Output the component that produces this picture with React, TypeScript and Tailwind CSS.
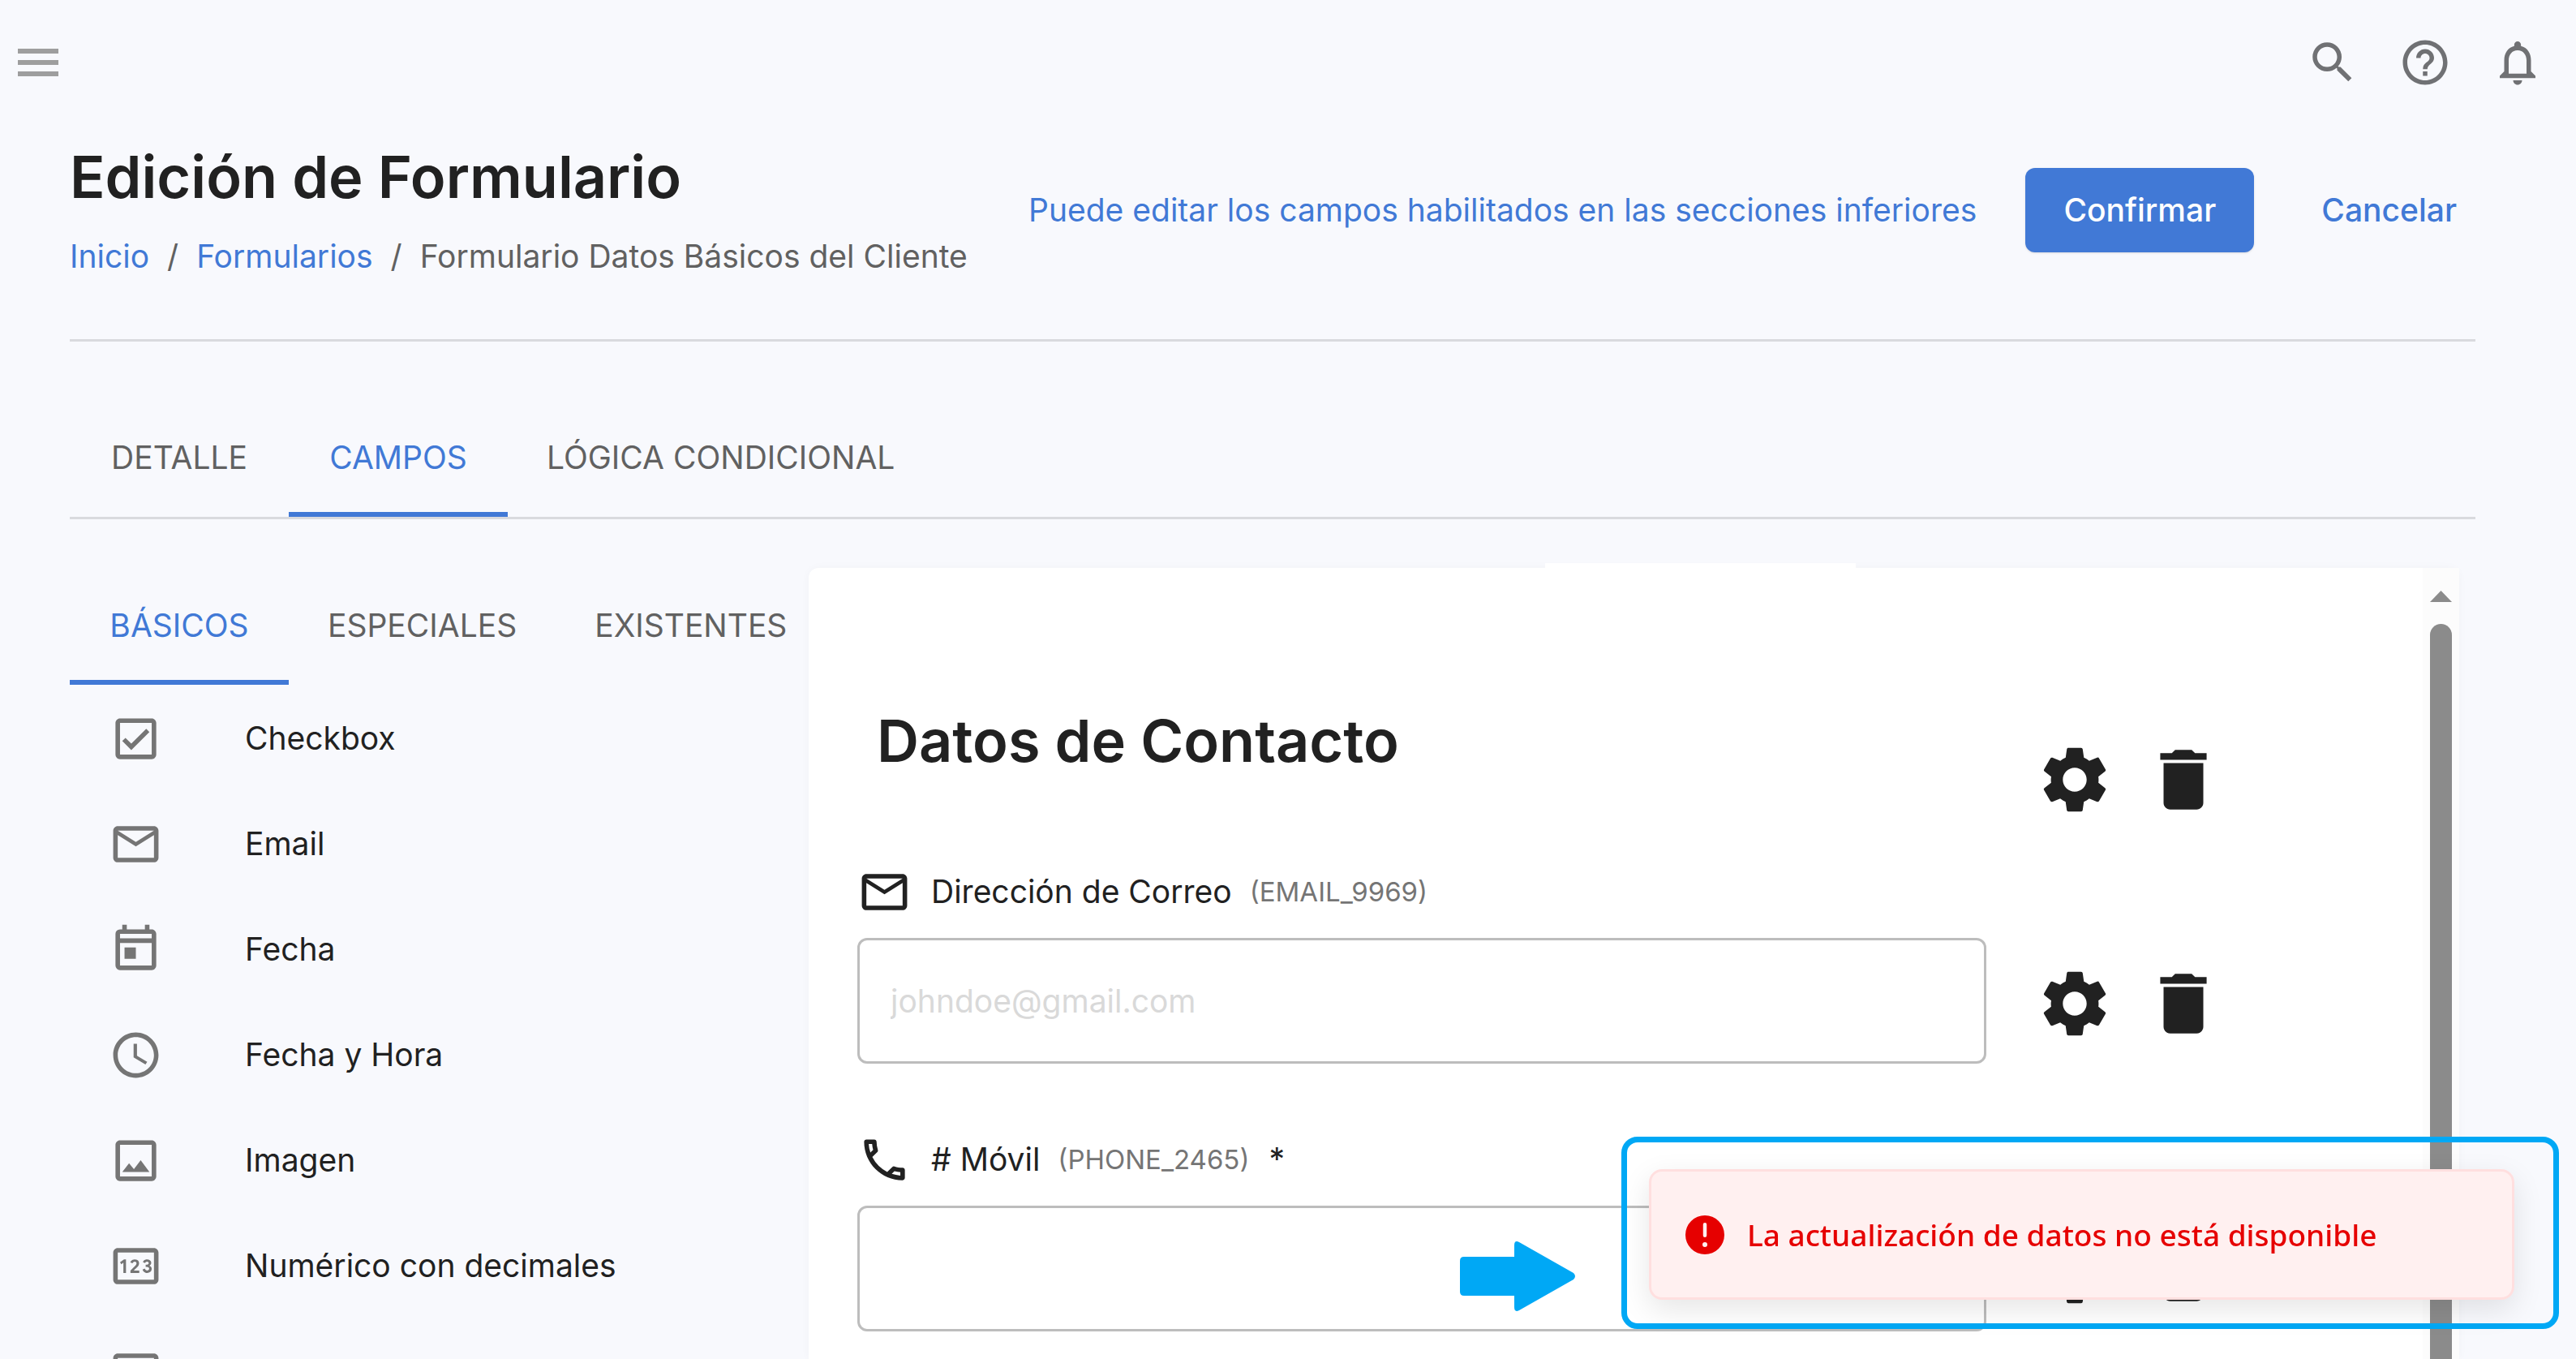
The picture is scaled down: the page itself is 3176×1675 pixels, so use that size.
import clsx from "clsx";
import type { IconType } from "react-icons";
import {
  MdDelete,
  MdHelpOutline,
  MdNotificationsNone,
  MdOutlineCheckBox,
  MdOutlineEmail,
  MdOutlineImage,
  MdOutlinePhone,
  MdOutlinePin,
  MdOutlineSchedule,
  MdOutlineToday,
  MdSearch,
  MdSettings,
} from "react-icons/md";

const tabs = ["DETALLE", "CAMPOS", "LÓGICA CONDICIONAL"];
const fieldTabs = ["BÁSICOS", "ESPECIALES", "EXISTENTES"];

const fieldTypes: { id: string; label?: string; icon: IconType }[] = [
  { id: "checkbox", label: "Checkbox", icon: MdOutlineCheckBox },
  { id: "email", label: "Email", icon: MdOutlineEmail },
  { id: "date", label: "Fecha", icon: MdOutlineToday },
  { id: "datetime", label: "Fecha y Hora", icon: MdOutlineSchedule },
  { id: "image", label: "Imagen", icon: MdOutlineImage },
  { id: "decimal", label: "Numérico con decimales", icon: MdOutlinePin },
  { id: "integer", icon: MdOutlinePin },
];

function Tab({ label, active }: { label: string; active: boolean }) {
  return (
    <button
      type="button"
      role="tab"
      aria-selected={active}
      className={clsx(
        "h-[147px] min-w-[270px] shrink-0 border-y-6 border-t-transparent px-12 pt-px text-[39px] whitespace-nowrap",
        active
          ? "border-b-[#4179d6] text-[#4179d6]"
          : "border-b-transparent text-[#616161]",
      )}
    >
      {label}
    </button>
  );
}

function RowActions() {
  return (
    <div className="flex shrink-0 gap-9 text-[#212121]">
      <button type="button" aria-label="Configurar">
        <MdSettings size={98} />
      </button>
      <button type="button" aria-label="Eliminar">
        <MdDelete size={98} />
      </button>
    </div>
  );
}

interface FieldProps {
  id: string;
  label: string;
  code: string;
  icon: IconType;
  type: string;
  placeholder?: string;
  required?: boolean;
}

function Field({ id, label, code, icon: Icon, type, placeholder, required }: FieldProps) {
  return (
    <div className="flex items-end gap-[60px]">
      <div className="min-w-0 flex-1">
        <label htmlFor={id} className="flex h-[67px] items-center text-[39px] text-[#212121]">
          <Icon size={67} className="mr-6 shrink-0" />
          {label}
          <span className="ml-[22px] text-[33px] text-[#757575]">({code})</span>
          {required && <span className="ml-6">*</span>}
        </label>
        <input
          id={id}
          type={type}
          placeholder={placeholder}
          className="mt-[23px] h-[155px] w-full rounded-xl border-3 border-[#bdbdbd] bg-white px-[38px] text-[39px] placeholder:text-[#d9d9d9]"
        />
      </div>
      <div className="mb-[25px]">
        <RowActions />
      </div>
    </div>
  );
}

function Toast() {
  return (
    <div className="fixed right-[21px] bottom-[37px] w-[1156px] rounded-[20px] border-7 border-[#00a8f5] pt-[33px] pr-12 pb-[29px] pl-[27px]">
      <div
        role="alert"
        className="flex h-[161px] items-center gap-[22px] rounded-2xl border-3 border-[#ffdfdf] bg-[#fff0f0] px-9 text-[#e60000] shadow-[0_12px_36px_rgba(0,0,0,0.1)]"
      >
        <svg viewBox="0 0 20 20" className="size-[60px] shrink-0" fill="currentColor">
          <path
            fillRule="evenodd"
            clipRule="evenodd"
            d="M18 10a8 8 0 1 1-16 0 8 8 0 0 1 16 0Zm-8-5a.75.75 0 0 1 .75.75v4.5a.75.75 0 0 1-1.5 0v-4.5A.75.75 0 0 1 10 5Zm0 10a1 1 0 1 0 0-2 1 1 0 0 0 0 2Z"
          />
        </svg>
        <span className="font-['Noto_Sans',sans-serif] text-[37px] font-medium whitespace-nowrap">
          La actualización de datos no está disponible
        </span>
      </div>
      <svg
        viewBox="0 0 142 86"
        className="absolute top-[122px] right-[1206px] w-[142px] fill-[#00a8f5]"
        aria-hidden="true"
      >
        <path d="M5 19h62V5q0-7 6-4l67 38q4 4 0 8L73 85q-6 3-6-4V67H5q-5 0-5-5V24q0-5 5-5z" />
      </svg>
    </div>
  );
}

export default function App() {
  return (
    <div className="flex h-screen flex-col overflow-hidden bg-[#f8f9fd] font-['Inter',sans-serif]">
      <header className="flex h-[154px] shrink-0 items-center justify-between pr-[39px] pl-[22px] text-[#707174]">
        <button type="button" aria-label="Menú" className="flex flex-col gap-2">
          <span className="h-[6px] w-[50px] bg-[#9e9e9e]" />
          <span className="h-[6px] w-[50px] bg-[#9e9e9e]" />
          <span className="h-[6px] w-[50px] bg-[#9e9e9e]" />
        </button>
        <div className="flex gap-12">
          <button type="button" aria-label="Buscar">
            <MdSearch size={66} />
          </button>
          <button type="button" aria-label="Ayuda">
            <MdHelpOutline size={66} />
          </button>
          <button type="button" aria-label="Notificaciones">
            <MdNotificationsNone size={66} />
          </button>
        </div>
      </header>

      <main className="flex min-h-0 flex-1 flex-col pr-[124px] pl-[86px]">
        {/* Page title and actions */}
        <div className="flex shrink-0 justify-between border-b-3 border-[#d9dade] pt-6 pb-[74px]">
          <div>
            <h1 className="text-[72px] leading-[80px] font-semibold text-[#212121]">
              Edición de Formulario
            </h1>
            <nav className="mt-[30px] flex gap-[22px] text-[39px] leading-[56px] text-[#616161]">
              <a href="#inicio" className="text-[#4179d6]">Inicio</a>
              <span>/</span>
              <a href="#formularios" className="text-[#4179d6]">Formularios</a>
              <span>/</span>
              <span>Formulario Datos Básicos del Cliente</span>
            </nav>
          </div>
          <div className="mt-[29px] flex h-[104px] items-center text-[39px] text-[#4179d6]">
            <p>Puede editar los campos habilitados en las secciones inferiores</p>
            <button
              type="button"
              className="ml-[60px] h-full w-[282px] rounded-xl bg-[#4179d6] font-medium text-white shadow-sm"
            >
              Confirmar
            </button>
            <button type="button" className="ml-[60px] h-full px-[23px] font-medium">
              Cancelar
            </button>
          </div>
        </div>

        <div role="tablist" className="mt-[69px] flex shrink-0 border-b-3 border-[#d9dade]">
          {tabs.map((tab) => (
            <Tab key={tab} label={tab} active={tab === "CAMPOS"} />
          ))}
        </div>

        <div className="flex min-h-0 flex-1">
          {/* Field palette */}
          <aside className="w-[911px] shrink-0 overflow-hidden pt-[57px]">
            <div role="tablist" className="flex">
              {fieldTabs.map((tab) => (
                <Tab key={tab} label={tab} active={tab === "BÁSICOS"} />
              ))}
            </div>
            <ul className="pt-px">
              {fieldTypes.map(({ id, label, icon: Icon }) => (
                <li key={id}>
                  <button
                    type="button"
                    aria-label={label ?? id}
                    className="flex h-[130px] w-full items-center gap-[101px] pl-12 text-[39px] text-[#212121]"
                  >
                    <Icon size={67} color="#757575" />
                    {label}
                  </button>
                </li>
              ))}
            </ul>
          </aside>

          {/* Form preview */}
          <section className="relative mt-[60px] mr-[20px] flex min-w-0 flex-1 rounded-t-xl bg-white shadow-[0_0_12px_rgba(0,0,0,0.03)]">
            <div className="absolute -top-[6px] left-[908px] h-3 w-[383px] bg-white" />
            <div className="min-w-0 flex-1 pt-[173px] pr-[246px] pl-[60px]">
              <div className="flex items-start justify-between pl-6">
                <h2 className="text-[72px] leading-[80px] font-semibold text-[#212121]">
                  Datos de Contacto
                </h2>
                <div className="mt-[39px]">
                  <RowActions />
                </div>
              </div>
              <div className="mt-14 flex flex-col gap-[85px]">
                <Field
                  id="email"
                  label="Dirección de Correo"
                  code="EMAIL_9969"
                  icon={MdOutlineEmail}
                  type="email"
                  placeholder="johndoe@gmail.com"
                />
                <Field
                  id="phone"
                  label="# Móvil"
                  code="PHONE_2465"
                  icon={MdOutlinePhone}
                  type="tel"
                  required
                />
              </div>
            </div>
            <div className="flex w-[45px] flex-col items-center bg-[#fcfcfc] pt-7" aria-hidden="true">
              <svg viewBox="0 0 27 14" className="w-[27px] fill-[#8b8b8b]">
                <path d="M13.5 0 27 14H0z" />
              </svg>
              <div className="mt-[27px] w-[27px] flex-1 rounded-t-full bg-[#8b8b8b]" />
            </div>
          </section>
        </div>
      </main>

      <Toast />
    </div>
  );
}
